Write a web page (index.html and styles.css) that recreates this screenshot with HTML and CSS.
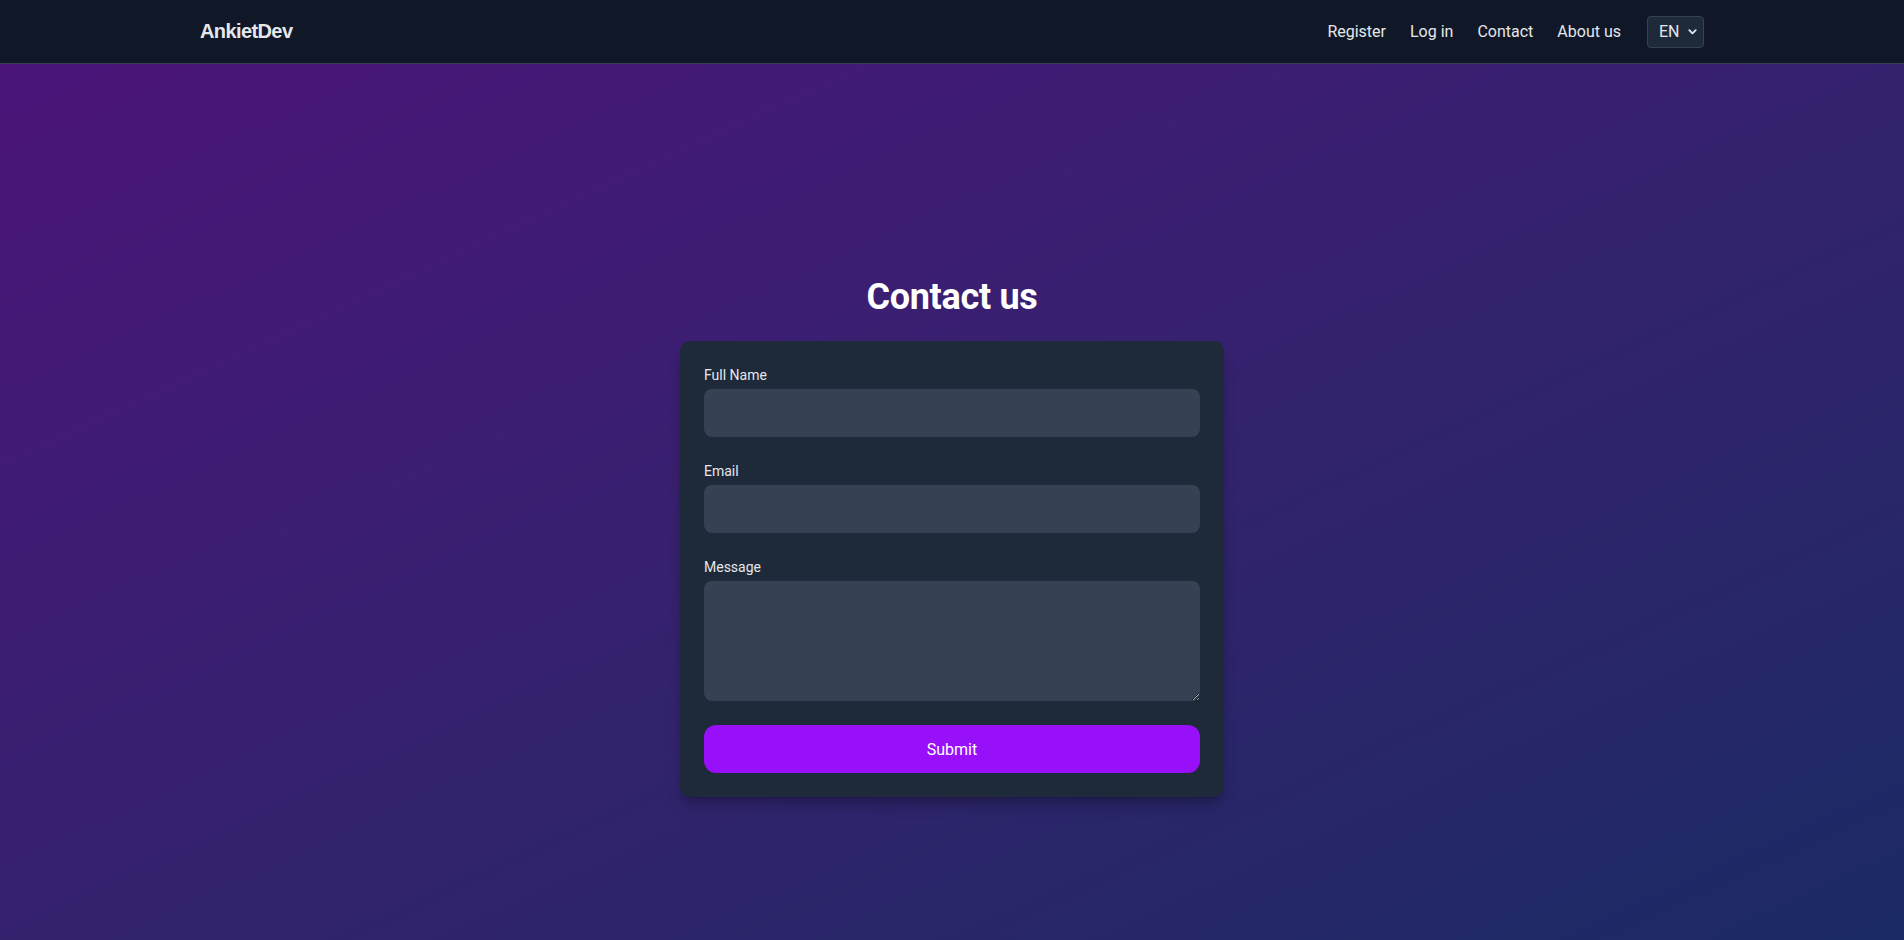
FILE: index.html
```html
<!DOCTYPE html>
<html lang="en">
<head>
<meta charset="utf-8">
<title>Contact us - AnkietDev</title>
<link rel="stylesheet" href="styles.css">
</head>
<body>
<header class="nav">
  <div class="nav-inner">
    <a class="logo" href="#">AnkietDev</a>
    <nav class="nav-links">
      <a href="#">Register</a>
      <a href="#">Log in</a>
      <a href="#">Contact</a>
      <a href="#">About us</a>
      <div class="lang">
        <span>EN</span>
        <svg class="chev" viewBox="0 0 12 12" width="11" height="11"><path d="M2.5 4.5 L6 8 L9.5 4.5" fill="none" stroke="#e5e7eb" stroke-width="2" stroke-linecap="round" stroke-linejoin="round"/></svg>
      </div>
    </nav>
  </div>
</header>
<main class="main">
  <h1 class="title">Contact us</h1>
  <form class="card">
    <div class="field">
      <label class="label">Full Name</label>
      <input class="input" type="text">
    </div>
    <div class="field">
      <label class="label">Email</label>
      <input class="input" type="email">
    </div>
    <div class="field">
      <label class="label">Message</label>
      <textarea class="input textarea" rows="4"></textarea>
    </div>
    <button class="submit" type="button">Submit</button>
  </form>
</main>
</body>
</html>
```
FILE: styles.css
```css
* { box-sizing: border-box; }
html, body { margin: 0; padding: 0; height: 100%; }
body {
  font-family: Roboto, "Liberation Sans", sans-serif;
  color: #e5e7eb;
  background: #101828;
  overflow: hidden;
}
a { color: inherit; text-decoration: none; }

.nav {
  background: #101828;
  border-bottom: 1px solid #364153;
  height: 64px;
}
.nav-inner {
  max-width: 1536px;
  margin: 0 auto;
  padding: 0 16px;
  height: 63px;
  display: flex;
  align-items: center;
  justify-content: space-between;
}
.logo {
  font-family: "Liberation Sans", Arial, sans-serif;
  font-weight: 700;
  font-size: 20px;
  color: #e5e7eb;
  letter-spacing: -0.6px;
}
.nav-links {
  display: flex;
  align-items: center;
  gap: 24px;
  font-size: 16px;
  color: #e5e7eb;
}
.nav-links a { line-height: 24px; }
.lang {
  margin-left: 2px;
  width: 57px;
  height: 32px;
  background: #1e2939;
  border: 1px solid #364153;
  border-radius: 4px;
  display: flex;
  align-items: center;
  justify-content: space-between;
  padding: 0 5px 0 11px;
  font-size: 16px;
  color: #e5e7eb;
}
.chev { display: block; }

.main {
  height: calc(100vh - 64px);
  background: linear-gradient(to bottom right, #4b1579 0%, #35226f 50%, #1b2a64 100%);
  display: flex;
  flex-direction: column;
  align-items: center;
  padding-top: 213px;
}
.title {
  margin: 0 0 24px;
  font-size: 36px;
  line-height: 40px;
  font-weight: 700;
  color: #ffffff;
  letter-spacing: -0.3px;
}
.card {
  width: 544px;
  background: #1e2939;
  border-radius: 10px;
  padding: 24px;
  box-shadow: 0 10px 15px -3px rgba(0,0,0,0.25), 0 4px 6px -4px rgba(0,0,0,0.2);
}
.field {
  display: flex;
  flex-direction: column;
  margin-bottom: 24px;
}
.label {
  font-size: 14px;
  line-height: 20px;
  color: #e5e7eb;
  margin-bottom: 4px;
}
.input {
  display: block;
  width: 100%;
  height: 48px;
  background: #364153;
  border: none;
  border-radius: 8px;
  padding: 12px 16px;
  font: inherit;
  color: #fff;
  outline: none;
}
.textarea {
  height: 120px;
  resize: vertical;
}
.submit {
  display: block;
  width: 100%;
  height: 48px;
  border: none;
  border-radius: 12px;
  background: #9810fa;
  color: #ffffff;
  font-family: inherit;
  font-size: 16px;
  cursor: pointer;
}
```
